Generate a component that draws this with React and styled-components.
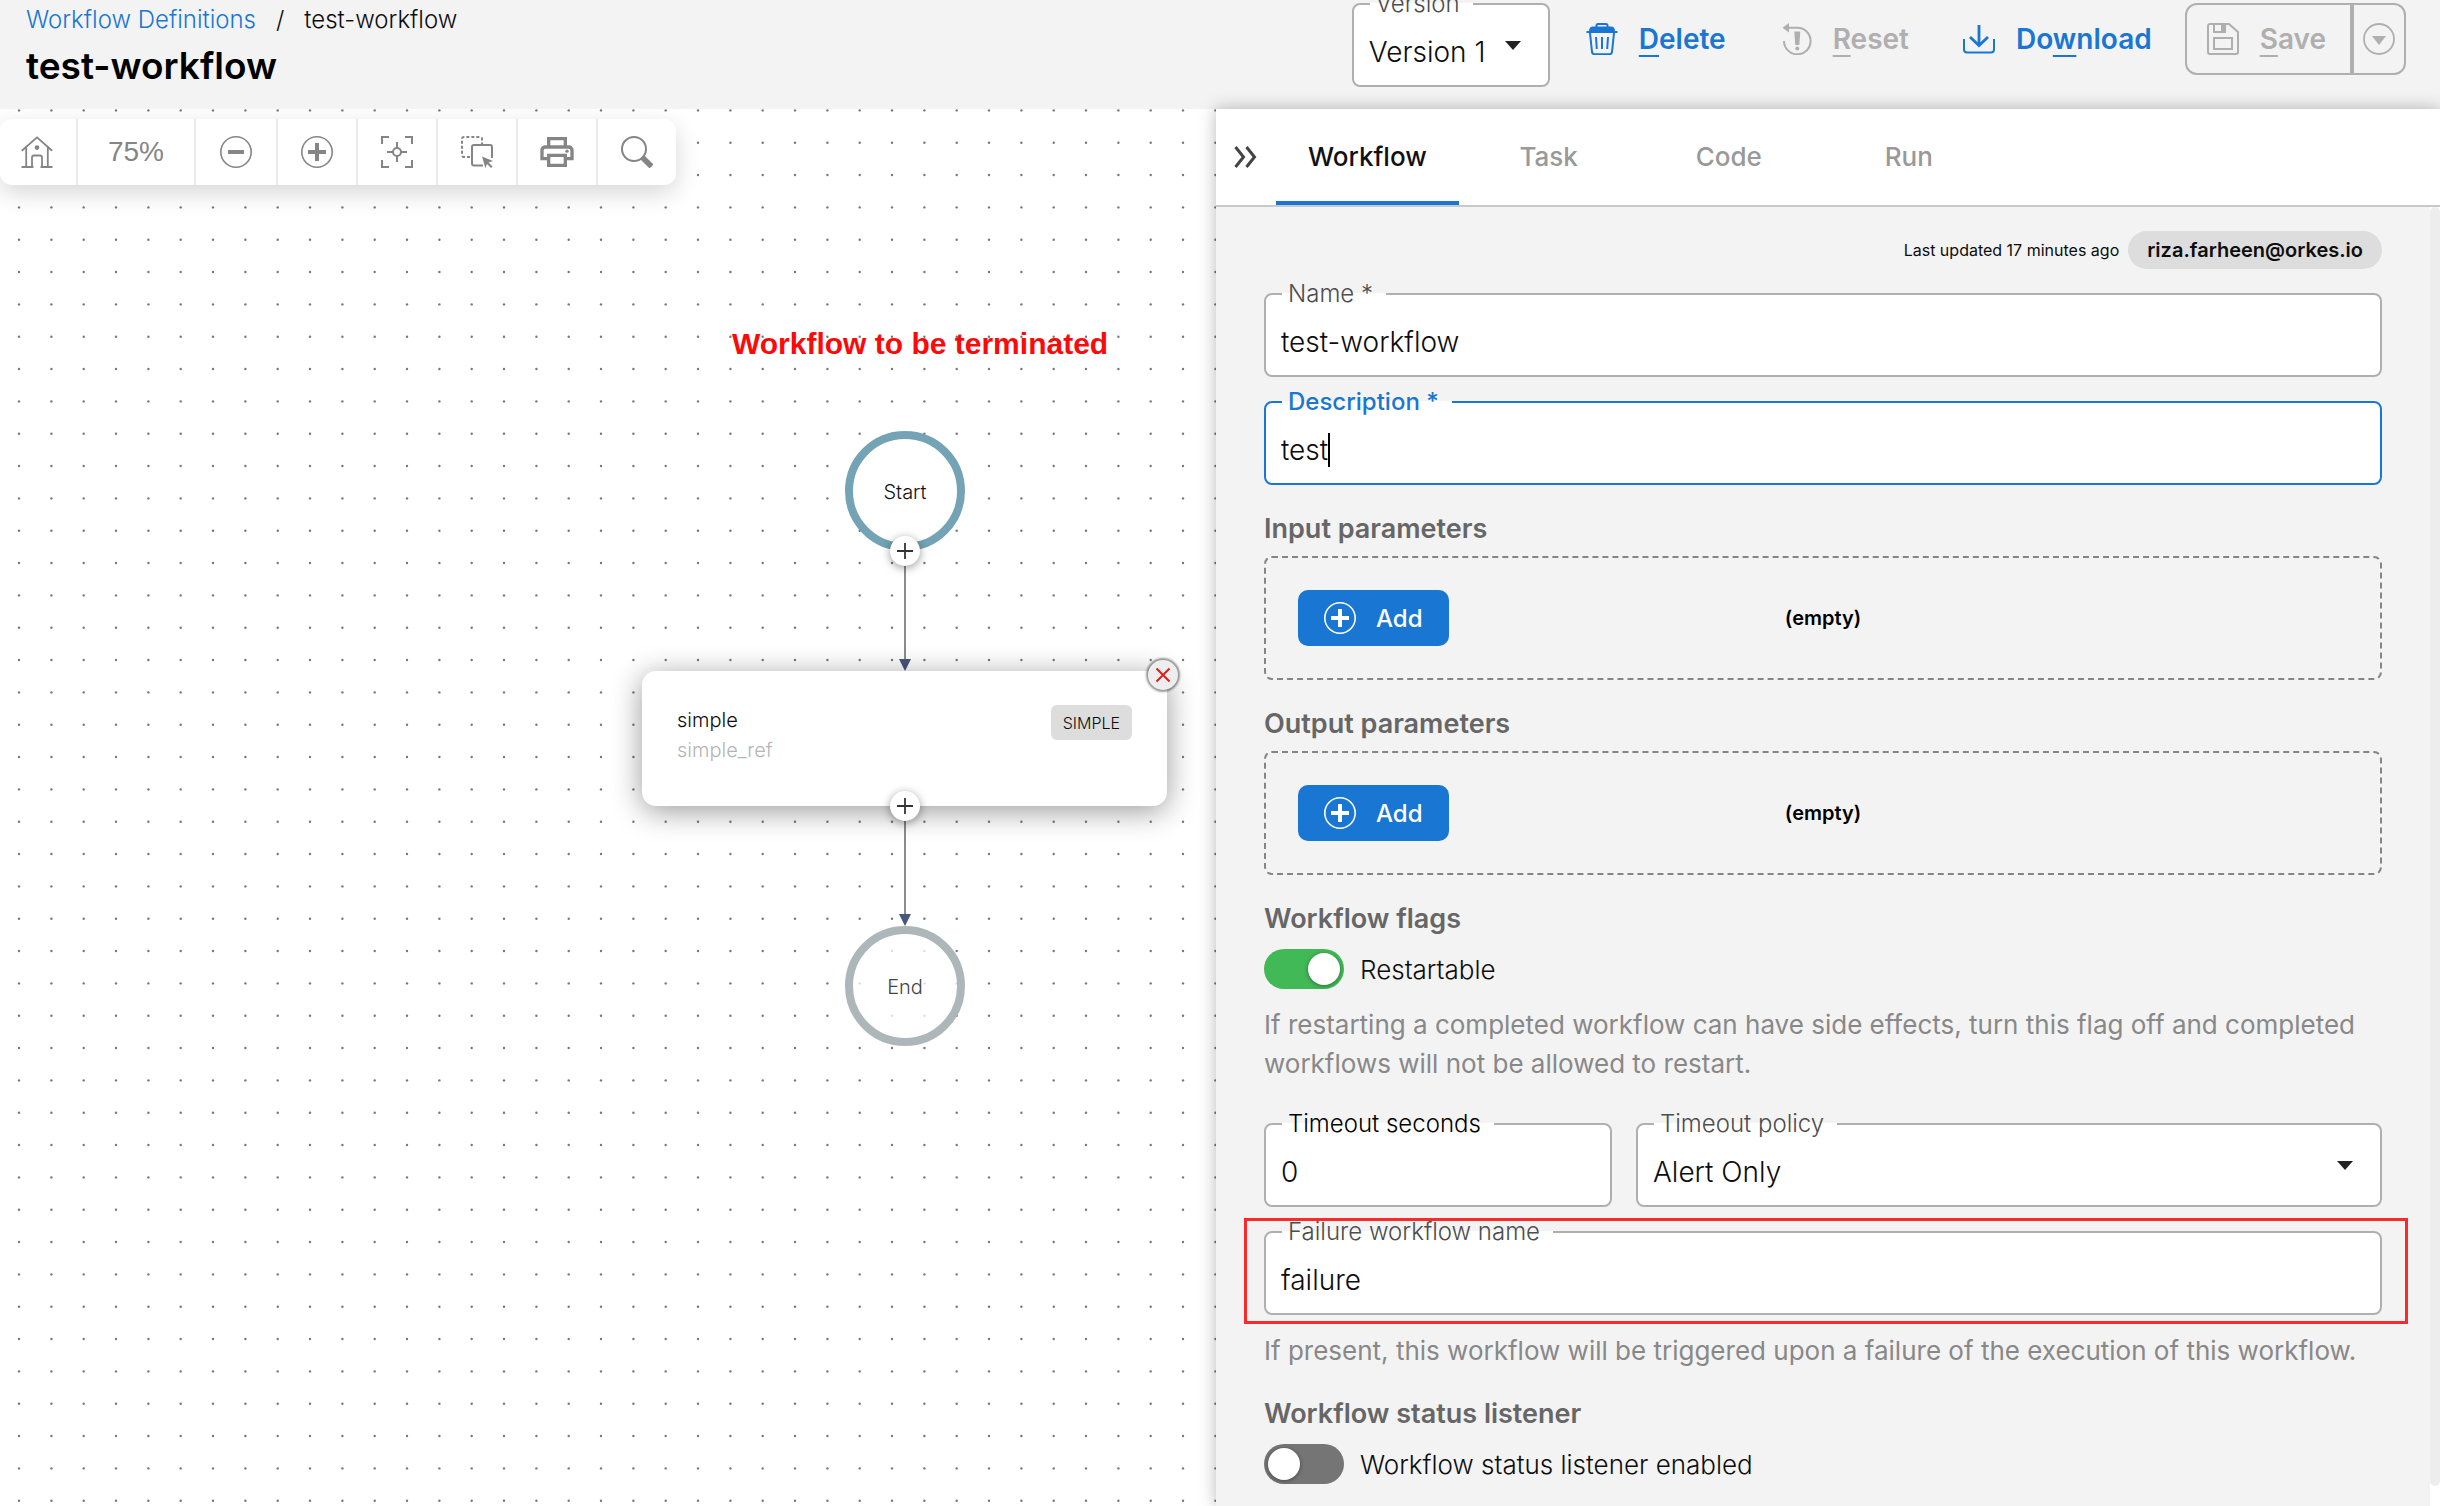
import React from "react";
import styled, { createGlobalStyle, css } from "styled-components";

const color = {
  page: "#f3f3f3",
  blue: "#1976d2",
  line: "#afafaf",
  muted: "#888888",
  heading: "#666666",
  ink: "#0d0d0d",
  green: "#41b957",
};

const GlobalStyle = createGlobalStyle`
  *, *::before, *::after { box-sizing: border-box; }
  body {
    margin: 0;
    background: ${color.page};
    color: ${color.ink};
    font-family: Inter, "Open Sans", sans-serif;
    font-weight: 350;
  }
  button, input, select { font: inherit; color: inherit; }
  button { border: 0; background: none; padding: 0; cursor: pointer; }
`;

/* ---------- icons ---------- */

const Svg = styled.svg`
  display: block;
  flex: none;
  fill: none;
  stroke: currentColor;
  stroke-width: 2;
`;

const Icon = ({ size = 32, box = 32, children, ...rest }) => (
  <Svg width={size} height={size} viewBox={`0 0 ${box} ${box}`} aria-hidden="true" {...rest}>
    {children}
  </Svg>
);

const HomeIcon = () => (
  <Icon>
    <path d="M.8 14.8 16 1.4l15.2 13.4M5.2 11v20M26.8 11v20M.5 31h12M19.5 31h12M11 31V21.500q0-2 2-2h6q2 0 2 2V31" strokeWidth="1.8" />
    <circle cx="16" cy="11.600" r="2.300" fill="currentColor" stroke="none" />
  </Icon>
);
const MinusIcon = () => (
  <Icon>
    <circle cx="16" cy="16" r="15.200" strokeWidth="1.600" />
    <path d="M8 16h16" strokeWidth="4" />
  </Icon>
);
const PlusIcon = () => (
  <Icon>
    <circle cx="16" cy="16" r="15.200" strokeWidth="1.600" />
    <path d="M7 16h18M16 7v18" strokeWidth="4" />
  </Icon>
);
const FitIcon = () => (
  <Icon>
    <path d="M1 8V1h7M24 1h7v7M31 24v7h-7M8 31H1v-7M16 6v6M16 20v6M6 16h6M20 16h6" />
    <circle cx="16" cy="16" r="4" />
  </Icon>
);
const SelectIcon = () => (
  <Icon>
    <path d="M9 21H3q-2 0-2-2V3q0-2 2-2h16q2 0 2 2v5" strokeDasharray="3 2" />
    <path d="M22 29.500H13q-2 0-2-2V11q0-2 2-2h16q2 0 2 2v11" />
    <path d="M21 20.500l11 4.500-4.500 1.500 4 4-1.500 1.500-4-4-1.600 4.200z" fill="currentColor" stroke="none" />
  </Icon>
);
const PrintIcon = () => (
  <Icon size={40} box={24}>
    <path
      d="M19 8h-1V3H6v5H5c-1.660 0-3 1.340-3 3v6h4v4h12v-4h4v-6c0-1.660-1.340-3-3-3zM8 5h8v3H8V5zm8 12v2H8v-4h8v2zm2-2v-2H6v2H4v-4c0-.55.45-1 1-1h14c.55 0 1 .45 1 1v4h-2z"
      fill="currentColor"
      stroke="none"
    />
    <circle cx="18" cy="11.500" r="1" fill="currentColor" stroke="none" />
  </Icon>
);
const SearchIcon = () => (
  <Icon>
    <circle cx="13" cy="13" r="12" />
    <path d="M21 21l9.500 9.500" strokeWidth="5.500" />
  </Icon>
);
const TrashIcon = () => (
  <Icon>
    <path d="M10.500 4V2.600q0-1.500 1.500-1.500h8q1.500 0 1.500 1.500V4" />
    <path d="M3 8.500Q3 3.500 7 3.500h18q4 0 4 5z" fill="currentColor" stroke="none" />
    <path d="M.5 9h31M4 10l2 19q.3 2.200 2.500 2.200h15q2.200 0 2.500-2.200l2-19M10 14l.8 12M16 14v12M22 14l-.8 12" />
  </Icon>
);
const ResetIcon = () => (
  <Icon>
    <path d="M8 4.700h9.500A13.300 13.300 0 1 1 4 18" />
    <path d="M2.500 4.700 9 0v9.500z" fill="currentColor" stroke="none" />
    <path d="M14.300 8.500h6l-1 13.500h-4z" fill="currentColor" stroke="none" />
    <circle cx="17.300" cy="25.500" r="2" fill="currentColor" stroke="none" />
  </Icon>
);
const DownloadIcon = () => (
  <Icon>
    <path d="M1 16v10.500q0 3 3 3h24q3 0 3-3V16" />
    <path d="M16 2v20M7 14l9 8.500 9-8.500" strokeWidth="2.800" />
  </Icon>
);
const SaveIcon = () => (
  <Icon>
    <path d="M1 3q0-2 2-2h19l9 8v20q0 2-2 2H3q-2 0-2-2zM7 1v8h11V1M7 15h18v11H7z" />
    <path d="M14 1h5v8h-5z" fill="currentColor" stroke="none" />
  </Icon>
);
const MoreIcon = () => (
  <Icon>
    <circle cx="16" cy="16" r="15" strokeWidth="1.800" />
    <path d="M9 13h14l-7 9z" fill="currentColor" stroke="none" />
  </Icon>
);
const CollapseIcon = () => (
  <Icon size={26} box={26}>
    <path d="M2.500 3l8 10-8 10M13.500 3l8 10-8 10" strokeWidth="3" />
  </Icon>
);

/* ---------- header ---------- */

const Page = styled.div`
  min-height: 100vh;
  display: flex;
  flex-direction: column;
`;

const Header = styled.header`
  display: flex;
  justify-content: space-between;
  align-items: flex-start;
  padding: 0 34px 15px 26px;
`;

const Heading = styled.div`
  padding-top: 2px;
`;

const Crumbs = styled.nav`
  display: flex;
  gap: 20px;
  font-size: 24px;
  line-height: 36px;

  a { color: ${color.blue}; text-decoration: none; }
`;

const Title = styled.h1`
  margin: 0;
  font-size: 37px;
  line-height: 56px;
  font-weight: 600;
  color: #000;
`;

const Actions = styled.div`
  display: flex;
  align-items: flex-start;
  gap: 18px;
  padding-top: 3px;
`;

const ActionButton = styled.button`
  height: 72px;
  display: flex;
  align-items: center;
  gap: 21px;
  padding: 0 18px;
  font-size: 28px;
  font-weight: 600;
  color: ${color.blue};

  &:disabled { color: ${color.line}; cursor: default; }
  u {
    text-decoration-thickness: 2px;
    text-underline-offset: 6px;
    text-decoration-skip-ink: none;
  }
`;

const SplitButton = styled.div`
  display: flex;
  height: 72px;
  margin-left: -3px;
  border: 2px solid ${color.line};
  border-radius: 12px;
`;

const SaveButton = styled(ActionButton)`
  height: 100%;
  padding: 0 24px 0 20px;
  border-right: 4px solid ${color.line};
`;

const SaveMenuButton = styled(ActionButton)`
  height: 100%;
  padding: 0 9px;
`;

/* ---------- outlined form fields ---------- */

const Outline = styled.fieldset`
  flex: 1 1 ${(p) => p.$basis || "auto"};
  min-width: 0;
  margin: 0;
  padding: 0;
  border: 2px solid ${(p) => (p.$active ? color.blue : color.line)};
  border-radius: 8px;
  background: #fff;

  legend {
    margin-left: 16px;
    padding: 0 13px 0 6px;
    font-size: 24px;
    line-height: 28px;
    white-space: nowrap;
    color: ${(p) => (p.$active ? color.blue : p.$strong ? "#000" : "#4d4d4d")};
    font-weight: ${(p) => (p.$active ? 500 : "inherit")};
  }
`;

const VersionSlot = styled.div`
  display: flex;
  width: 198px;
  margin-top: -13px;
`;

const Control = styled.div`
  position: relative;
  display: flex;
  align-items: center;
  height: 67px;
  padding: 0 15px;
  font-size: 28px;
`;

const bareControl = css`
  border: 0;
  margin: 0;
  padding: 0;
  outline: 0;
  background: none;
  height: 42px;
`;

const TextInput = styled.input`
  ${bareControl}
  width: 100%;
`;

const FocusedInput = styled.input`
  ${bareControl}
  field-sizing: content;
`;

const Caret = styled.span`
  width: 2px;
  height: 34px;
  background: #000;
`;

const SelectInput = styled.select`
  ${bareControl}
  appearance: none;
  width: 100%;
`;

const SelectArrow = styled.svg`
  position: absolute;
  top: 23px;
  right: 27px;
  pointer-events: none;
  fill: #222;
`;

const Field = ({ id, label, active, strong, basis, children }) => (
  <Outline $active={active} $strong={strong} $basis={basis}>
    <legend>
      <label htmlFor={id}>{label}</label>
    </legend>
    <Control>{children}</Control>
  </Outline>
);

const Arrow = () => (
  <SelectArrow width="16" height="9" viewBox="0 0 16 9" aria-hidden="true">
    <path d="M0 0h16L8 9z" />
  </SelectArrow>
);

/* ---------- workspace ---------- */

const Workspace = styled.main`
  flex: 1;
  display: grid;
  grid-template-columns: 1216fr 1224fr;
`;

const Canvas = styled.section`
  position: relative;
  overflow: hidden;
  background: #fff;
`;

const CanvasArt = styled.svg`
  position: absolute;
  inset: 0;
  width: 100%;
  height: 100%;
`;

const Toolbar = styled.div`
  position: absolute;
  top: 10px;
  left: 0;
  display: flex;
  height: 66px;
  border-radius: 12px;
  background: #fff;
  color: #858585;
  box-shadow: 0 8px 24px rgba(0, 0, 0, 0.16);
`;

const Tool = styled.button`
  display: flex;
  align-items: center;
  justify-content: center;
  width: ${(p) => p.$width || 80}px;
  border-right: 2px solid #ebebeb;
  color: inherit;
  font-family: "Liberation Sans", Arial, sans-serif;
  font-weight: 400;
  font-size: 28px;

  &:first-child { padding-right: 3px; }
  &:last-child { border-right: 0; }
`;

const CanvasTitle = styled.div`
  position: absolute;
  top: 218px;
  left: 732px;
  font: 700 30px/34px "Liberation Sans", Arial, sans-serif;
  white-space: nowrap;
  color: #fb0a0a;
`;

const Terminal = styled.div`
  position: absolute;
  left: 845px;
  top: ${(p) => p.$top}px;
  width: 120px;
  height: 120px;
  display: grid;
  place-items: center;
  padding-top: 2px;
  border: 8px solid ${(p) => (p.$end ? "#adb7ba" : "#73a3b4")};
  border-radius: 50%;
  background: ${(p) => (p.$end ? "rgba(255, 255, 255, 0.75)" : "#fff")};
  color: ${(p) => (p.$end ? "#444" : "#111")};
  font-size: 20px;
`;

const TaskCard = styled.article`
  position: absolute;
  left: 642px;
  top: 562px;
  width: 525px;
  height: 135px;
  display: flex;
  justify-content: space-between;
  align-items: flex-start;
  padding: 34px 35px;
  border-radius: 14px;
  background: #fff;
  box-shadow: 0 5px 30px rgba(0, 0, 0, 0.4);
  font-size: 20px;
  line-height: 30px;
`;

const TaskRef = styled.div`
  color: #b5b5b5;
`;

const TaskType = styled.span`
  padding: 1px 12px 0;
  border-radius: 6px;
  background: #ddd;
  font-size: 16px;
  line-height: 34px;
`;

const RoundButton = styled.button`
  position: absolute;
  left: ${(p) => p.$x - 15}px;
  top: ${(p) => p.$y - 15}px;
  width: 30px;
  height: 30px;
  display: grid;
  place-items: center;
  border-radius: 50%;
  background: ${(p) => (p.$danger ? "#eee" : "#fff")};
  color: ${(p) => (p.$danger ? "#e21b1b" : "#333")};
  box-shadow: ${(p) => (p.$danger ? "0 0 2px 2px rgba(0, 0, 0, 0.4)" : "0 2px 10px rgba(0, 0, 0, 0.4)")};
`;

/* ---------- side panel ---------- */

const Panel = styled.section`
  position: relative;
  display: flex;
  flex-direction: column;
  background: ${color.page};
  box-shadow: 0 0 16px rgba(0, 0, 0, 0.28);
`;

const TabBar = styled.div`
  display: flex;
  height: 98px;
  border-bottom: 2px solid #c9c9c9;
  background: #fff;
`;

const CollapseButton = styled.button`
  width: 60px;
  display: grid;
  place-items: center;
  color: #444;
`;

const Tab = styled.button`
  min-width: 180px;
  padding: 3px 32px 0;
  border-bottom: 4px solid ${(p) => (p.$active ? color.blue : "transparent")};
  font-size: 26px;
  font-weight: 500;
  color: ${(p) => (p.$active ? "#111" : "#999")};
`;

const Scroller = styled.div`
  flex: 1;
  display: flex;
`;

const ScrollTrack = styled.div`
  width: 10px;
  padding-bottom: 20px;
  background: #fff;

  &::before {
    content: "";
    display: block;
    height: 100%;
    border-radius: 6px;
    background: #ededed;
  }
`;

const Form = styled.form`
  flex: 1;
  min-width: 0;
  padding: 24px 48px 19px;
`;

const Meta = styled.div`
  display: flex;
  justify-content: flex-end;
  align-items: center;
  gap: 9px;
  font-size: 16px;
  font-weight: 400;
`;

const Owner = styled.span`
  padding: 0 19px;
  border-radius: 19px;
  background: #ddd;
  font-size: 20px;
  line-height: 38px;
  font-weight: 600;
`;

const FieldRow = styled.div`
  display: flex;
  gap: 24px;
  margin-top: ${(p) => p.$space || 11}px;
`;

const Highlight = styled(FieldRow)`
  position: relative;

  &::after {
    content: "";
    position: absolute;
    inset: 0 -26px -9px -20px;
    border: 3px solid #fa2a2a;
    pointer-events: none;
  }
`;

const SectionTitle = styled.h2`
  margin: 24px 0 8px;
  font-size: 27px;
  line-height: 39px;
  font-weight: 600;
  color: ${color.heading};
`;

const ParamBox = styled.div`
  display: grid;
  grid-template-columns: 1fr auto 1fr;
  align-items: center;
  padding: 32px;
  border: 2px dashed #858585;
  border-radius: 8px;
`;

const Empty = styled.span`
  font-size: 20px;
  font-weight: 600;
  color: #000;
`;

const AddButton = styled.button`
  justify-self: start;
  display: flex;
  align-items: center;
  gap: 20px;
  height: 56px;
  padding: 0 26px;
  border-radius: 10px;
  background: ${color.blue};
  color: #fff;
  font-size: 24px;
  font-weight: 500;
`;

const SwitchRow = styled.label`
  display: flex;
  align-items: center;
  gap: 16px;
  height: 46px;
  font-size: 26px;
  cursor: pointer;
`;

const Switch = styled.input.attrs({ type: "checkbox", role: "switch" })`
  appearance: none;
  display: flex;
  width: 80px;
  height: 40px;
  margin: 0;
  padding: 4px;
  border-radius: 20px;
  background: #757575;

  &::before {
    content: "";
    width: 32px;
    height: 32px;
    border-radius: 50%;
    background: #fff;
    box-shadow: 0 1px 4px rgba(0, 0, 0, 0.4);
  }
  &:checked { justify-content: flex-end; background: ${color.green}; }
`;

const Help = styled.p`
  margin: ${(p) => p.$space}px 0 0;
  font-size: 26px;
  line-height: 39px;
  font-weight: 400;
  color: ${color.muted};
`;

/* ---------- pieces ---------- */

const tools = [
  { name: "Home", icon: <HomeIcon />, width: 78 },
  { name: "Zoom level", icon: "75%", width: 118 },
  { name: "Zoom out", icon: <MinusIcon />, width: 82 },
  { name: "Zoom in", icon: <PlusIcon /> },
  { name: "Fit to screen", icon: <FitIcon /> },
  { name: "Select", icon: <SelectIcon /> },
  { name: "Print", icon: <PrintIcon /> },
  { name: "Search", icon: <SearchIcon />, width: 78 },
];

const dotColumns = [19, 51.4, 83.7];
const dotRows = [1.4, 33.7, 66];

const Params = ({ title }) => (
  <>
    <SectionTitle>{title}</SectionTitle>
    <ParamBox>
      <AddButton type="button">
        <PlusIcon />
        Add
      </AddButton>
      <Empty>(empty)</Empty>
    </ParamBox>
  </>
);

const Diagram = () => (
  <Canvas>
    <CanvasArt aria-hidden="true">
      <defs>
        <pattern id="dots" width="97" height="97" patternUnits="userSpaceOnUse">
          {dotRows.map((y) => dotColumns.map((x) => <circle key={`${x}-${y}`} cx={x} cy={y} r="1.200" fill="#777" />))}
        </pattern>
      </defs>
      <rect width="100%" height="100%" fill="url(#dots)" />
      <path d="M905 440V552M905 695V807" stroke="#8c8c8c" strokeWidth="2" />
      <path d="M899 550h12l-6 12zM899 805h12l-6 12z" fill="#47567a" />
    </CanvasArt>
    <CanvasTitle>Workflow to be terminated</CanvasTitle>
    <Terminal $top={322}>Start</Terminal>
    <TaskCard>
      <div>
        <div>simple</div>
        <TaskRef>simple_ref</TaskRef>
      </div>
      <TaskType>SIMPLE</TaskType>
    </TaskCard>
    <Terminal $top={817} $end>End</Terminal>
    {[442, 697].map((y) => (
      <RoundButton key={y} $x={905} $y={y} aria-label="Add task">
        <Icon size={16} box={16}>
          <path d="M0 8h16M8 0v16" strokeWidth="1.800" />
        </Icon>
      </RoundButton>
    ))}
    <RoundButton $x={1163} $y={566} $danger aria-label="Remove task">
      <Icon size={16} box={16}>
        <path d="M1.500 1.500l13 13M14.500 1.500l-13 13" strokeWidth="2" />
      </Icon>
    </RoundButton>
    <Toolbar>
      {tools.map((t) => (
        <Tool key={t.name} $width={t.width} aria-label={t.name}>
          {t.icon}
        </Tool>
      ))}
    </Toolbar>
  </Canvas>
);

export default function App() {
  return (
    <Page>
      <GlobalStyle />
      <Header>
        <Heading>
          <Crumbs aria-label="Breadcrumb">
            <a href="#definitions">Workflow Definitions</a>
            <span>/</span>
            <span>test-workflow</span>
          </Crumbs>
          <Title>test-workflow</Title>
        </Heading>
        <Actions>
          <VersionSlot>
            <Field id="version" label="Version">
              <SelectInput id="version" defaultValue="1">
                <option value="1">Version 1</option>
              </SelectInput>
              <Arrow />
            </Field>
          </VersionSlot>
          <ActionButton>
            <TrashIcon />
            <span><u>D</u>elete</span>
          </ActionButton>
          <ActionButton disabled>
            <ResetIcon />
            <span><u>R</u>eset</span>
          </ActionButton>
          <ActionButton>
            <DownloadIcon />
            <span>Do<u>w</u>nload</span>
          </ActionButton>
          <SplitButton>
            <SaveButton disabled>
              <SaveIcon />
              <span><u>S</u>ave</span>
            </SaveButton>
            <SaveMenuButton disabled aria-label="More save options">
              <MoreIcon />
            </SaveMenuButton>
          </SplitButton>
        </Actions>
      </Header>
      <Workspace>
        <Diagram />
        <Panel>
          <TabBar role="tablist">
            <CollapseButton aria-label="Collapse panel">
              <CollapseIcon />
            </CollapseButton>
            {["Workflow", "Task", "Code", "Run"].map((name, i) => (
              <Tab key={name} role="tab" aria-selected={i === 0} $active={i === 0}>
                {name}
              </Tab>
            ))}
          </TabBar>
          <Scroller>
            <Form>
              <Meta>
                <span>Last updated 17 minutes ago</span>
                <Owner>riza.farheen@orkes.io</Owner>
              </Meta>
              <FieldRow>
                <Field id="name" label="Name *">
                  <TextInput id="name" defaultValue="test-workflow" />
                </Field>
              </FieldRow>
              <FieldRow>
                <Field id="description" label="Description *" active>
                  <FocusedInput id="description" defaultValue="test" />
                  <Caret />
                </Field>
              </FieldRow>
              <Params title="Input parameters" />
              <Params title="Output parameters" />
              <SectionTitle>Workflow flags</SectionTitle>
              <SwitchRow>
                <Switch defaultChecked />
                Restartable
              </SwitchRow>
              <Help $space={13}>
                If restarting a completed workflow can have side effects, turn this flag off and completed workflows
                will not be allowed to restart.
              </Help>
              <FieldRow $space={27}>
                <Field id="timeout" label="Timeout seconds" strong basis="0">
                  <TextInput id="timeout" defaultValue="0" />
                </Field>
                <Field id="policy" label="Timeout policy" basis="402px">
                  <SelectInput id="policy" defaultValue="alert">
                    <option value="alert">Alert Only</option>
                  </SelectInput>
                  <Arrow />
                </Field>
              </FieldRow>
              <Highlight>
                <Field id="failure" label="Failure workflow name">
                  <TextInput id="failure" defaultValue="failure" />
                </Field>
              </Highlight>
              <Help $space={16}>
                If present, this workflow will be triggered upon a failure of the execution of this workflow.
              </Help>
              <SectionTitle>Workflow status listener</SectionTitle>
              <SwitchRow>
                <Switch />
                Workflow status listener enabled
              </SwitchRow>
            </Form>
            <ScrollTrack />
          </Scroller>
        </Panel>
      </Workspace>
    </Page>
  );
}
